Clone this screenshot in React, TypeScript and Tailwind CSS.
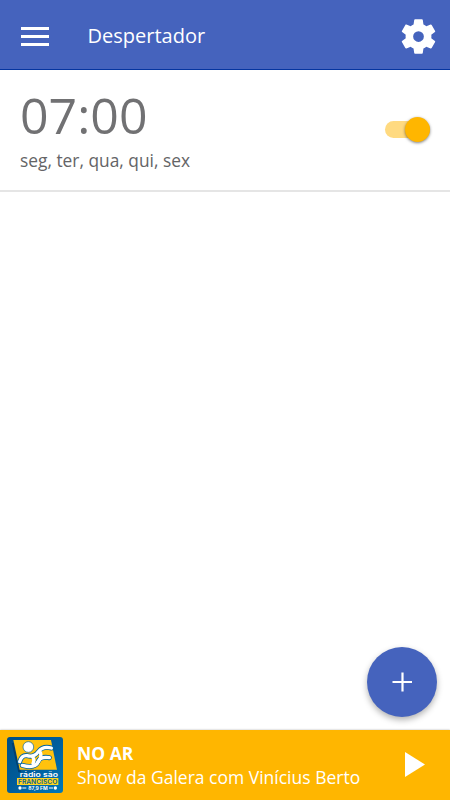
import React from 'react';

function MenuIcon() {
  return (
    <svg width="28" height="19" viewBox="0 0 28 19" fill="#fff" aria-hidden="true">
      <path d="M0 0h28v3H0zM0 8h28v3H0zM0 16h28v3H0z" />
    </svg>
  );
}

function GearIcon() {
  return (
    <svg width="43" height="43" viewBox="0 0 24 24" fill="#fff" aria-hidden="true">
      <path d="M19.14 12.94c.04-.3.06-.61.06-.94 0-.32-.02-.64-.07-.94l2.03-1.58a.49.49 0 0 0 .12-.61l-1.92-3.32a.488.488 0 0 0-.59-.22l-2.39.96c-.5-.38-1.03-.7-1.62-.94l-.36-2.54a.484.484 0 0 0-.48-.41h-3.84c-.24 0-.43.17-.47.41l-.36 2.54c-.59.24-1.13.57-1.62.94l-2.39-.96c-.22-.08-.47 0-.59.22L2.74 8.87c-.12.21-.08.47.12.61l2.03 1.58c-.05.3-.09.63-.09.94s.02.64.07.94l-2.03 1.58a.49.49 0 0 0-.12.61l1.92 3.32c.12.22.37.29.59.22l2.39-.96c.5.38 1.03.7 1.62.94l.36 2.54c.05.24.24.41.48.41h3.84c.24 0 .44-.17.47-.41l.36-2.54c.59-.24 1.13-.56 1.62-.94l2.39.96c.22.08.47 0 .59-.22l1.92-3.32c.12-.22.07-.47-.12-.61l-2.01-1.58zM12 15A3 3 0 1 1 12 9a3 3 0 0 1 0 6z" />
    </svg>
  );
}

function StationLogo() {
  return (
    <svg className="size-14 shrink-0 rounded-[3px]" viewBox="22 28 168 168" aria-hidden="true">
      <defs>
        <linearGradient id="blue" x1="0" y1="0" x2="1" y2="1">
          <stop offset="0" stopColor="#004f85" />
          <stop offset="0.5" stopColor="#005d9c" />
          <stop offset="1" stopColor="#0079ba" />
        </linearGradient>
      </defs>
      <rect x="22" y="28" width="168" height="168" fill="url(#blue)" />
      <path d="M36 46L56 134H64L48 46Z" fill="#003f70" />
      <path d="M41 37H154L172 126H60Z" fill="#ffc20e" />
      <g fill="none" strokeLinecap="round" strokeLinejoin="round" stroke="#0064a3" strokeWidth="15">
        <path d="M60 102Q66 82 82 84Q104 90 116 72Q130 54 155 61" />
        <path d="M68 113Q108 124 116 100Q124 86 149 90" />
      </g>
      <g fill="none" strokeLinecap="round" strokeLinejoin="round" stroke="#fff">
        <path d="M60 102Q66 82 82 84Q104 90 116 72Q130 54 155 61" strokeWidth="10" />
        <path d="M68 113Q108 124 116 100Q124 86 149 90" strokeWidth="10" />
        <path d="M98 86Q106 94 100 108M122 74Q128 88 112 108" strokeWidth="10" />
      </g>
      <circle cx="86" cy="58" r="16" fill="#fff" stroke="#0064a3" strokeWidth="2" />
      <text x="60" y="147" textLength="115" lengthAdjust="spacingAndGlyphs" fill="#fff" fontFamily="Inter, sans-serif" fontSize="20" fontWeight="600">rádio são</text>
      <rect x="52" y="151" width="124" height="21" fill="#ffd51e" />
      <text x="55" y="168" textLength="118" lengthAdjust="spacingAndGlyphs" fill="#075d91" fontFamily="Inter, sans-serif" fontSize="18" fontWeight="600">FRANCISCO</text>
      <circle cx="61" cy="181" r="5" fill="#fff" />
      <circle cx="167" cy="181" r="5" fill="#fff" />
      <path d="M68 181H80M148 181H160" stroke="#fff" strokeWidth="3" />
      <text x="86" y="187" textLength="58" lengthAdjust="spacingAndGlyphs" fill="#fff" fontFamily="Inter, sans-serif" fontSize="14" fontWeight="700">87,9 FM</text>
    </svg>
  );
}

export default function App() {
  return (
    <div className="flex h-[800px] w-[450px] flex-col overflow-hidden bg-white font-['Open_Sans',sans-serif]">
      <header className="flex h-[70px] shrink-0 items-center border-b border-[#0535a0] bg-[#4563bd] pl-[21px] pr-[10px] pt-[3px] text-white">
        <button aria-label="Menu"><MenuIcon /></button>
        <h1 className="ml-[38.5px] flex-1 text-[20px] leading-7">Despertador</h1>
        <button aria-label="Configurações"><GearIcon /></button>
      </header>

      <main className="flex min-h-0 flex-1 flex-col">
        <section className="flex h-[122px] shrink-0 justify-between border-b-2 border-[#e5e5e5] px-5">
          <div className="pt-[17px]">
            <div className="text-[50px] leading-[56px] text-[#717173]">07:00</div>
            <div className="mt-[5px] text-[17.35px] leading-6 text-[#646466]">seg, ter, qua, qui, sex</div>
          </div>
          <button role="switch" aria-checked="true" aria-label="Ativar alarme" className="mt-[51px] flex h-[17px] w-[45px] items-center justify-end rounded-full bg-[#ffda80]">
            <span className="size-[25px] shrink-0 rounded-full bg-[#ffb600] shadow-[0_1px_3px_rgba(0,0,0,0.5)]" />
          </button>
        </section>
        <div className="mb-[13px] mr-[13px] mt-auto flex justify-end">
          <button aria-label="Adicionar" className="flex size-[70px] items-center justify-center rounded-full bg-[#4563bd] shadow-[0_3px_6px_rgba(0,0,0,0.3)]">
            <svg width="20" height="20" viewBox="0 0 20 20" aria-hidden="true"><path d="M10.5 .5v19M.5 10h19.5" stroke="#fff" strokeWidth="2.2" /></svg>
          </button>
        </div>
      </main>

      <footer className="flex h-[70px] shrink-0 items-center bg-[#ffb600] pl-[7px] pr-[25px] text-white shadow-[0_0_2px_rgba(0,0,0,0.3)]">
        <StationLogo />
        <div className="ml-3.5 flex-1">
          <div className="text-[17.5px] font-bold leading-6">NO AR</div>
          <div className="whitespace-nowrap text-[17.5px] leading-6">Show da Galera com Vinícius Berto</div>
        </div>
        <button aria-label="Reproduzir" className="pb-0.5"><svg width="20" height="25" viewBox="0 0 20 25" className="block" aria-hidden="true"><path d="M0 0v25l20-12.5z" fill="#fff" /></svg></button>
      </footer>
    </div>
  );
}
